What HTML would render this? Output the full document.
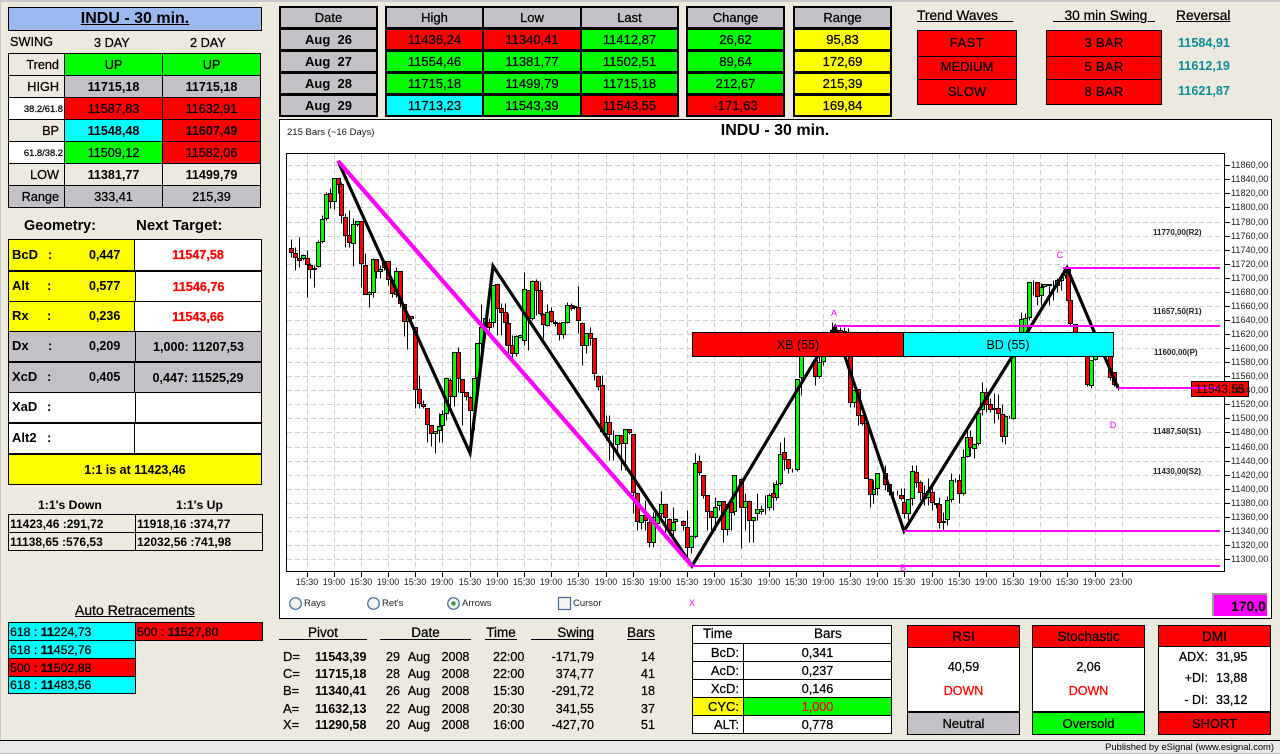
<!DOCTYPE html>
<html><head><meta charset="utf-8"><title>INDU - 30 min.</title>
<style>
html,body{margin:0;padding:0;width:1280px;height:754px;overflow:hidden;background:#ece9df}
body{position:relative;font-family:"Liberation Sans",sans-serif;font-size:13px;color:#000;-webkit-text-stroke:.25px}
.c,.t{position:absolute;box-sizing:border-box;white-space:pre}
.c{display:flex;align-items:center;justify-content:center;border:1px solid #000}
.n{border:0}
.t{line-height:14px}
.b{font-weight:bold;-webkit-text-stroke:0}
.g{background:#c3c1c5}.r{background:#f00}.l{background:#0f0}.y{background:#ff0}.a{background:#0ff}.w{background:#fff}.e{background:#ece9df}
.u{text-decoration:underline}
.k{position:absolute;background:#000}
.d{word-spacing:-.6px}
svg{position:absolute;left:0;top:0}
</style></head><body>
<div style="position:absolute;left:0;top:0;width:1280px;height:2px;background:#c8c8c8"></div>
<div style="position:absolute;left:0;top:0;width:1px;height:754px;background:#c8c8c8"></div>

<!-- left header -->
<div class="c b u" style="left:8px;top:7px;width:254px;height:24px;background:#9bb9ee;font-size:16px">INDU - 30 min.</div>
<div class="t" style="left:10px;top:35px;font-size:12.7px">SWING</div>
<div class="t" style="left:94px;top:36px;font-size:12.7px">3 DAY</div>
<div class="t" style="left:190px;top:36px;font-size:12.7px">2 DAY</div>

<div class="c e" style="left:8px;top:53px;width:57px;height:23px;justify-content:flex-end;padding-right:5px;font-size:12.7px">Trend</div>
<div class="c l" style="left:64px;top:53px;width:99px;height:23px;font-size:12.7px">UP</div>
<div class="c l" style="left:162px;top:53px;width:99px;height:23px;font-size:12.7px">UP</div>
<div class="c e" style="left:8px;top:75px;width:57px;height:23px;justify-content:flex-end;padding-right:5px;font-size:12.7px">HIGH</div>
<div class="c g b" style="left:64px;top:75px;width:99px;height:23px;font-size:12.6px">11715,18</div>
<div class="c g b" style="left:162px;top:75px;width:99px;height:23px;font-size:12.6px">11715,18</div>
<div class="c w" style="left:8px;top:97px;width:57px;height:23px;justify-content:flex-end;padding-right:1px;font-size:9.4px">38.2/61.8</div>
<div class="c r" style="left:64px;top:97px;width:99px;height:23px;font-size:12.6px">11587,83</div>
<div class="c r" style="left:162px;top:97px;width:99px;height:23px;font-size:12.6px">11632,91</div>
<div class="c e" style="left:8px;top:119px;width:57px;height:23px;justify-content:flex-end;padding-right:5px;font-size:12.7px">BP</div>
<div class="c a b" style="left:64px;top:119px;width:99px;height:23px;font-size:12.6px">11548,48</div>
<div class="c r b" style="left:162px;top:119px;width:99px;height:23px;font-size:12.6px">11607,49</div>
<div class="c w" style="left:8px;top:141px;width:57px;height:23px;justify-content:flex-end;padding-right:1px;font-size:9.4px">61.8/38.2</div>
<div class="c l" style="left:64px;top:141px;width:99px;height:23px;font-size:12.6px">11509,12</div>
<div class="c r" style="left:162px;top:141px;width:99px;height:23px;font-size:12.6px">11582,06</div>
<div class="c e" style="left:8px;top:163px;width:57px;height:23px;justify-content:flex-end;padding-right:5px;font-size:12.7px">LOW</div>
<div class="c e b" style="left:64px;top:163px;width:99px;height:23px;font-size:12.6px">11381,77</div>
<div class="c e b" style="left:162px;top:163px;width:99px;height:23px;font-size:12.6px">11499,79</div>
<div class="c g" style="left:8px;top:185px;width:57px;height:23px;justify-content:flex-end;padding-right:5px;font-size:12.7px">Range</div>
<div class="c g" style="left:64px;top:185px;width:99px;height:23px;font-size:12.6px">333,41</div>
<div class="c g" style="left:162px;top:185px;width:99px;height:23px;font-size:12.6px">215,39</div>

<div class="t b" style="left:24px;top:219px;font-size:14.4px">Geometry:</div>
<div class="t b" style="left:136px;top:219px;font-size:15px">Next Target:</div>

<!-- geometry -->
<div class="k" style="left:8px;top:239px;width:254px;height:246px"></div>
<div class="c n y" style="left:9px;top:240px;width:125px;height:30px"></div>
<div class="c n w" style="left:135px;top:240px;width:126px;height:30px;color:#f00;font-weight:bold;font-size:12.6px">11547,58</div>
<div class="c n y" style="left:9px;top:272px;width:126px;height:29px"></div>
<div class="c n w" style="left:136px;top:272px;width:125px;height:29px;color:#f00;font-weight:bold;font-size:12.6px">11546,76</div>
<div class="c n y" style="left:9px;top:302px;width:125px;height:29px"></div>
<div class="c n w" style="left:135px;top:302px;width:126px;height:29px;color:#f00;font-weight:bold;font-size:12.6px">11543,66</div>
<div class="c n g b" style="left:9px;top:332px;width:126px;height:29px"></div>
<div class="c n g b" style="left:136px;top:332px;width:125px;height:29px;font-size:12.6px">1,000: 11207,53</div>
<div class="c n g b" style="left:9px;top:363px;width:125px;height:29px"></div>
<div class="c n g b" style="left:135px;top:363px;width:126px;height:29px;font-size:12.6px">0,447: 11525,29</div>
<div class="c n w" style="left:9px;top:393px;width:126px;height:29px"></div>
<div class="c n w" style="left:136px;top:393px;width:125px;height:29px"></div>
<div class="c n w" style="left:9px;top:424px;width:125px;height:29px"></div>
<div class="c n w" style="left:135px;top:424px;width:126px;height:29px"></div>
<div class="c n y b" style="left:9px;top:455px;width:252px;height:29px;font-size:12.5px">1:1 is at 11423,46</div>
<div class="t b" style="left:12px;top:248px">BcD</div><div class="t b" style="left:48px;top:248px">:</div><div class="t b" style="left:89px;top:248px;font-size:12.5px">0,447</div>
<div class="t b" style="left:12px;top:279px">Alt</div><div class="t b" style="left:47px;top:279px">:</div><div class="t b" style="left:89px;top:279px;font-size:12.5px">0,577</div>
<div class="t b" style="left:12px;top:309px">Rx</div><div class="t b" style="left:47px;top:309px">:</div><div class="t b" style="left:89px;top:309px;font-size:12.5px">0,236</div>
<div class="t b" style="left:12px;top:339px">Dx</div><div class="t b" style="left:48px;top:339px">:</div><div class="t b" style="left:89px;top:339px;font-size:12.5px">0,209</div>
<div class="t b" style="left:12px;top:370px">XcD</div><div class="t b" style="left:47px;top:370px">:</div><div class="t b" style="left:89px;top:370px;font-size:12.5px">0,405</div>
<div class="t b" style="left:12px;top:400px">XaD</div><div class="t b" style="left:47px;top:400px">:</div>
<div class="t b" style="left:12px;top:431px">Alt2</div><div class="t b" style="left:47px;top:431px">:</div>

<div class="t b" style="left:38px;top:498px;font-size:12.2px">1:1's Down</div>
<div class="t b" style="left:176px;top:498px;font-size:12.2px">1:1's Up</div>
<div class="c b" style="left:8px;top:514px;width:128px;height:19px;justify-content:flex-start;padding-left:1px;font-size:12px">11423,46 :291,72</div>
<div class="c b" style="left:135px;top:514px;width:128px;height:19px;justify-content:flex-start;padding-left:1px;font-size:12px">11918,16 :374,77</div>
<div class="c b" style="left:8px;top:532px;width:128px;height:19px;justify-content:flex-start;padding-left:1px;font-size:12px">11138,65 :576,53</div>
<div class="c b" style="left:135px;top:532px;width:128px;height:19px;justify-content:flex-start;padding-left:1px;font-size:12px">12032,56 :741,98</div>

<div class="t u" style="left:75px;top:603px;font-size:14px">Auto Retracements</div>
<div class="c a" style="left:8px;top:622px;width:128px;height:19px;justify-content:flex-start;padding-left:1px;font-size:12.3px">618 : <b>11</b>224,73</div>
<div class="c r" style="left:135px;top:622px;width:128px;height:19px;justify-content:flex-start;padding-left:1px;font-size:12.3px">500 : <b>11</b>527,80</div>
<div class="c a" style="left:8px;top:640px;width:128px;height:19px;justify-content:flex-start;padding-left:1px;font-size:12.3px">618 : <b>11</b>452,76</div>
<div class="c r" style="left:8px;top:658px;width:128px;height:19px;justify-content:flex-start;padding-left:1px;font-size:12.3px">500 : <b>11</b>502,88</div>
<div class="c a" style="left:8px;top:676px;width:128px;height:18px;justify-content:flex-start;padding-left:1px;font-size:12.3px">618 : <b>11</b>483,56</div>

<!-- top tables -->
<div class="k" style="left:279px;top:6px;width:99px;height:111px"></div>
<div class="c n g" style="left:281px;top:8px;width:95px;height:19px">Date</div>
<div class="c n g b" style="left:281px;top:30px;width:95px;height:19px">Aug  26</div>
<div class="c n g b" style="left:281px;top:52px;width:95px;height:19px">Aug  27</div>
<div class="c n g b" style="left:281px;top:74px;width:95px;height:19px">Aug  28</div>
<div class="c n g b" style="left:281px;top:96px;width:95px;height:19px">Aug  29</div>

<div class="k" style="left:385px;top:6px;width:294px;height:111px"></div>
<div class="c n g" style="left:387px;top:8px;width:95px;height:19px">High</div>
<div class="c n g" style="left:484px;top:8px;width:96px;height:19px">Low</div>
<div class="c n g" style="left:582px;top:8px;width:95px;height:19px">Last</div>
<div class="c n r" style="left:387px;top:30px;width:95px;height:19px">11436,24</div>
<div class="c n r" style="left:484px;top:30px;width:96px;height:19px">11340,41</div>
<div class="c n l" style="left:582px;top:30px;width:95px;height:19px">11412,87</div>
<div class="c n l" style="left:387px;top:52px;width:95px;height:19px">11554,46</div>
<div class="c n l" style="left:484px;top:52px;width:96px;height:19px">11381,77</div>
<div class="c n l" style="left:582px;top:52px;width:95px;height:19px">11502,51</div>
<div class="c n l" style="left:387px;top:74px;width:95px;height:19px">11715,18</div>
<div class="c n l" style="left:484px;top:74px;width:96px;height:19px">11499,79</div>
<div class="c n l" style="left:582px;top:74px;width:95px;height:19px">11715,18</div>
<div class="c n a" style="left:387px;top:96px;width:95px;height:19px">11713,23</div>
<div class="c n l" style="left:484px;top:96px;width:96px;height:19px">11543,39</div>
<div class="c n r" style="left:582px;top:96px;width:95px;height:19px">11543,55</div>

<div class="k" style="left:686px;top:6px;width:99px;height:111px"></div>
<div class="c n g" style="left:688px;top:8px;width:95px;height:19px">Change</div>
<div class="c n l" style="left:688px;top:30px;width:95px;height:19px">26,62</div>
<div class="c n l" style="left:688px;top:52px;width:95px;height:19px">89,64</div>
<div class="c n l" style="left:688px;top:74px;width:95px;height:19px">212,67</div>
<div class="c n r" style="left:688px;top:96px;width:95px;height:19px">-171,63</div>

<div class="k" style="left:793px;top:6px;width:99px;height:111px"></div>
<div class="c n g" style="left:795px;top:8px;width:95px;height:19px">Range</div>
<div class="c n y" style="left:795px;top:30px;width:95px;height:19px">95,83</div>
<div class="c n y" style="left:795px;top:52px;width:95px;height:19px">172,69</div>
<div class="c n y" style="left:795px;top:74px;width:95px;height:19px">215,39</div>
<div class="c n y" style="left:795px;top:96px;width:95px;height:19px">169,84</div>

<!-- top right -->
<div class="t u" style="left:917px;top:9px;font-size:13.8px">Trend Waves    </div>
<div class="t u" style="left:1053px;top:9px;font-size:13.8px">   30 min Swing  </div>
<div class="t u" style="left:1176px;top:9px;font-size:13.8px">Reversal</div>
<div class="c r" style="left:917px;top:30px;width:100px;height:27px;font-size:13px;letter-spacing:.5px;padding-bottom:2px">FAST</div>
<div class="c r" style="left:917px;top:56px;width:100px;height:24px;font-size:13px;padding-bottom:3px">MEDIUM</div>
<div class="c r" style="left:917px;top:79px;width:100px;height:26px;font-size:13px;padding-bottom:2px">SLOW</div>
<div class="c r" style="left:1046px;top:30px;width:116px;height:27px;font-size:13px;letter-spacing:.3px;padding-bottom:2px">3 BAR</div>
<div class="c r" style="left:1046px;top:56px;width:116px;height:24px;font-size:13px;letter-spacing:.3px;padding-bottom:3px">5 BAR</div>
<div class="c r" style="left:1046px;top:79px;width:116px;height:26px;font-size:13px;letter-spacing:.3px;padding-bottom:2px">8 BAR</div>
<div class="t b" style="left:1178px;top:36px;font-size:12.6px;color:#0e8c99">11584,91</div>
<div class="t b" style="left:1178px;top:59px;font-size:12.6px;color:#0e8c99">11612,19</div>
<div class="t b" style="left:1178px;top:84px;font-size:12.6px;color:#0e8c99">11621,87</div>

<!-- chart panel -->
<div class="c w" style="left:279px;top:119px;width:993px;height:500px"></div>

<svg width="1280" height="754" viewBox="0 0 1280 754" font-family="Liberation Sans, sans-serif">
<g fill="none" stroke="#cfcfcf" stroke-dasharray="5 3" shape-rendering="crispEdges">
<path d="M287 165.5H1223M287 179.5H1223M287 193.5H1223M287 207.5H1223M287 222.5H1223M287 236.5H1223M287 250.5H1223M287 264.5H1223M287 278.5H1223M287 292.5H1223M287 306.5H1223M287 320.5H1223M287 334.5H1223M287 348.5H1223M287 362.5H1223M287 376.5H1223M287 390.5H1223M287 404.5H1223M287 418.5H1223M287 432.5H1223M287 447.5H1223M287 461.5H1223M287 475.5H1223M287 489.5H1223M287 503.5H1223M287 517.5H1223M287 531.5H1223M287 545.5H1223M287 559.5H1223"/>
<path d="M307.5 154V571M334.5 154V571M361.5 154V571M388.5 154V571M415.5 154V571M442.5 154V571M470.5 154V571M497.5 154V571M524.5 154V571M551.5 154V571M578.5 154V571M606.5 154V571M633.5 154V571M660.5 154V571M687.5 154V571M714.5 154V571M741.5 154V571M769.5 154V571M796.5 154V571M823.5 154V571M850.5 154V571M877.5 154V571M904.5 154V571M932.5 154V571M959.5 154V571M986.5 154V571M1013.5 154V571M1040.5 154V571M1067.5 154V571M1095.5 154V571M1122.5 154V571"/>
</g>
<g fill="none" stroke="#000" shape-rendering="crispEdges">
<path d="M286.5 153.5V571.5H1224.5V153.5ZM307.5 571V577M334.5 571V577M361.5 571V577M388.5 571V577M415.5 571V577M442.5 571V577M470.5 571V577M497.5 571V577M524.5 571V577M551.5 571V577M578.5 571V577M606.5 571V577M633.5 571V577M660.5 571V577M687.5 571V577M714.5 571V577M741.5 571V577M769.5 571V577M796.5 571V577M823.5 571V577M850.5 571V577M877.5 571V577M904.5 571V577M932.5 571V577M959.5 571V577M986.5 571V577M1013.5 571V577M1040.5 571V577M1067.5 571V577M1095.5 571V577M1122.5 571V577"/>
<path d="M1224 165.5h6M1224 179.5h6M1224 193.5h6M1224 207.5h6M1224 222.5h6M1224 236.5h6M1224 250.5h6M1224 264.5h6M1224 278.5h6M1224 292.5h6M1224 306.5h6M1224 320.5h6M1224 334.5h6M1224 348.5h6M1224 362.5h6M1224 376.5h6M1224 390.5h6M1224 404.5h6M1224 418.5h6M1224 432.5h6M1224 447.5h6M1224 461.5h6M1224 475.5h6M1224 489.5h6M1224 503.5h6M1224 517.5h6M1224 531.5h6M1224 545.5h6M1224 559.5h6"/>
</g>
<g transform="translate(.5 .5)" shape-rendering="crispEdges" stroke="#000" stroke-width="1">
<path fill="none" d="M291 239V257M295 247V270M299 237V267M303 254V260M307 250V297M310 263V278M314 265V287M318 240V267M322 215V243M326 192V220M330 188V208M334 178V209M338 178V193M341 182V223M345 213V247M349 210V247M353 218V266M357 221V226M361 221V287M365 253V294M369 291V307M373 258V297M376 259V278M380 265V278M384 260V270M388 261V285M392 280V297M396 267V297M400 271V307M404 304V336M407 315V349M411 316V321M415 327V408M419 375V408M423 400V408M427 408V442M431 425V446M435 431V453M439 413V442M442 410V442M446 377V420M450 378V412M454 352V406M458 347V392M462 379V425M466 392V400M470 396V450M474 378V430M477 343V382M481 304V360M485 318V338M489 318V330M493 285V327M497 284V335M501 303V335M505 303V345M508 313V355M512 335V358M516 335V356M520 335V338M524 272V345M528 290V350M532 280V320M536 279V315M540 281V315M543 313V338M547 304V326M551 307V322M555 320V326M559 322V340M563 322V338M567 302V323M571 303V310M574 305V309M578 286V333M582 322V365M586 333V353M590 327V345M594 338V380M598 375V390M602 375V432M606 415V440M609 415V460M613 430V460M617 435V452M621 435V470M625 429V470M629 429V434M633 434V513M637 493V530M641 515V529M645 500V530M649 520V547M653 512V547M657 513V528M661 491V520M665 504V535M669 518V535M673 507V535M675 518V524M683 520V530M687 510V563M691 535V553M695 453V538M699 455V475M703 475V498M707 495V530M711 511V530M715 497V530M719 501V510M723 501V542M727 504V535M731 497V530M734 475V515M741 478V548M745 493V530M749 500V542M753 517V542M757 493V520M761 505V514M765 495V514M769 493V510M773 482V510M776 480V500M780 442V485M784 437V470M788 459V473M792 468V472M797 379V471M801 356V395M815 356V385M819 356V378M823 356V365M832 322V334M836 326V334M840 327V334M844 327V334M848 328V334M850 356V407M854 390V407M858 389V425M862 415V425M866 423V478M870 478V507M873 480V503M877 473V495M885 465V490M889 484V495M893 491V495M897 490V495M901 488V500M904 488V518M908 499V520M912 465V505M916 465V487M920 480V500M924 485V505M928 478V505M932 487V510M936 503V508M939 497V528M943 512V530M947 496V525M951 473V502M955 478V482M959 474V503M963 449V495M967 430V457M970 430V456M974 443V458M978 408V445M982 382V415M986 388V412M990 398V412M994 393V423M998 394V419M1002 404V442M1005 415V444M1009 415V418M1013 356V419M1021 312V333M1025 313V333M1029 282V320M1033 280V295M1037 282V305M1041 283V305M1044 284V287M1049 284V305M1053 280V300M1057 278V292M1061 273V290M1065 269V278M1068 269V310M1070 300V325M1075 324V333M1087 356V386M1091 360V388M1095 356V360M1110 356V380M1114 372V386M1118 384V390"/>
<path fill="#0f0" d="M301 255h4V258h-4zM316 242h4V266h-4zM320 219h4V241h-4zM324 194h4V218h-4zM332 178h4V201h-4zM351 224h4V243h-4zM355 221h4V224h-4zM367 292h4V294h-4zM371 259h4V292h-4zM378 269h4V271h-4zM394 271h4V294h-4zM405 315h4V321h-4zM433 431h4V433h-4zM437 426h4V430h-4zM440 414h4V425h-4zM444 378h4V413h-4zM452 352h4V396h-4zM472 378h4V410h-4zM475 343h4V377h-4zM479 327h4V343h-4zM483 318h4V327h-4zM491 285h4V322h-4zM514 336h4V353h-4zM518 335h4V337h-4zM522 289h4V340h-4zM530 281h4V318h-4zM545 312h4V325h-4zM553 322h4V323h-4zM561 322h4V334h-4zM565 305h4V322h-4zM584 333h4V345h-4zM604 422h4V433h-4zM615 435h4V444h-4zM623 429h4V443h-4zM639 515h4V522h-4zM651 517h4V542h-4zM655 513h4V523h-4zM659 504h4V513h-4zM671 522h4V530h-4zM673 519h4V521h-4zM689 536h4V547h-4zM693 463h4V536h-4zM713 507h4V517h-4zM717 501h4V505h-4zM725 504h4V529h-4zM732 475h4V511h-4zM743 501h4V507h-4zM751 517h4V520h-4zM755 509h4V513h-4zM759 509h4V511h-4zM767 495h4V507h-4zM774 484h4V497h-4zM778 454h4V483h-4zM795 379h4V469h-4zM799 356h4V377h-4zM817 362h4V376h-4zM821 356h4V361h-4zM842 331h4V334h-4zM852 390h4V402h-4zM871 489h4V494h-4zM875 473h4V488h-4zM906 499h4V513h-4zM910 471h4V498h-4zM926 491h4V497h-4zM941 521h4V522h-4zM945 500h4V519h-4zM949 480h4V499h-4zM961 457h4V493h-4zM965 437h4V456h-4zM972 444h4V448h-4zM976 413h4V443h-4zM980 392h4V409h-4zM1003 416h4V436h-4zM1011 356h4V418h-4zM1019 319h4V333h-4zM1023 318h4V333h-4zM1027 282h4V317h-4zM1039 287h4V295h-4zM1042 284h4V286h-4zM1047 284h4V285h-4zM1055 280h4V285h-4zM1059 277h4V280h-4zM1063 270h4V275h-4zM1089 360h4V385h-4zM1093 356h4V359h-4z"/>
<path fill="#f00" d="M289 248h4V252h-4zM293 253h4V257h-4zM297 258h4V260h-4zM305 258h4V264h-4zM308 265h4V269h-4zM312 268h4V269h-4zM328 193h4V201h-4zM336 178h4V184h-4zM339 184h4V215h-4zM343 217h4V235h-4zM347 235h4V242h-4zM359 221h4V263h-4zM363 265h4V294h-4zM374 259h4V271h-4zM382 261h4V267h-4zM386 261h4V279h-4zM390 280h4V293h-4zM398 271h4V303h-4zM402 304h4V321h-4zM409 316h4V318h-4zM413 327h4V389h-4zM417 389h4V403h-4zM421 404h4V406h-4zM425 408h4V424h-4zM429 425h4V433h-4zM448 380h4V396h-4zM456 352h4V378h-4zM460 379h4V392h-4zM464 392h4V396h-4zM468 397h4V410h-4zM487 322h4V327h-4zM495 284h4V308h-4zM499 308h4V312h-4zM503 312h4V322h-4zM506 323h4V345h-4zM510 345h4V353h-4zM526 290h4V318h-4zM534 281h4V290h-4zM538 290h4V313h-4zM541 314h4V324h-4zM549 311h4V321h-4zM557 323h4V334h-4zM569 305h4V308h-4zM572 306h4V307h-4zM576 307h4V320h-4zM580 323h4V345h-4zM588 333h4V338h-4zM592 338h4V373h-4zM596 376h4V386h-4zM600 385h4V431h-4zM607 422h4V434h-4zM619 435h4V443h-4zM627 429h4V432h-4zM631 434h4V492h-4zM635 493h4V521h-4zM643 515h4V520h-4zM647 522h4V542h-4zM663 504h4V517h-4zM667 519h4V530h-4zM681 521h4V525h-4zM685 527h4V547h-4zM697 461h4V472h-4zM701 475h4V495h-4zM705 495h4V511h-4zM709 511h4V517h-4zM721 501h4V529h-4zM729 502h4V512h-4zM739 479h4V507h-4zM747 501h4V520h-4zM771 493h4V497h-4zM782 452h4V459h-4zM786 459h4V468h-4zM813 360h4V376h-4zM830 330h4V334h-4zM838 330h4V334h-4zM848 356h4V402h-4zM856 389h4V415h-4zM860 415h4V423h-4zM864 423h4V478h-4zM868 479h4V494h-4zM883 473h4V484h-4zM887 484h4V491h-4zM899 495h4V498h-4zM902 502h4V513h-4zM914 472h4V482h-4zM918 482h4V492h-4zM922 493h4V498h-4zM930 492h4V502h-4zM934 503h4V504h-4zM937 504h4V522h-4zM957 480h4V493h-4zM968 437h4V447h-4zM984 392h4V404h-4zM988 404h4V409h-4zM992 408h4V409h-4zM996 408h4V413h-4zM1000 414h4V436h-4zM1035 282h4V296h-4zM1066 269h4V300h-4zM1068 300h4V323h-4zM1073 324h4V333h-4zM1085 356h4V384h-4zM1108 356h4V377h-4zM1112 372h4V384h-4z"/>
</g>
<path d="M338 161L470 453L493 266L692 566L835 327L904 531L1067 268L1118 388" fill="none" stroke="#000" stroke-width="3.2" stroke-linejoin="miter"/>
<path d="M338 161L692 566" fill="none" stroke="#f0f" stroke-width="4.2"/>
<g shape-rendering="crispEdges">
<rect x="692.5" y="332.5" width="211" height="24" fill="#f00" stroke="#000"/>
<rect x="903.5" y="332.5" width="210" height="24" fill="#0ff" stroke="#000"/>
<rect x="1191.5" y="381.5" width="57" height="15" fill="#f00" stroke="#000"/>
<path d="M692 566H1220M835 326H1220M1063 268H1220M904 531H1220M1118 388H1220" stroke="#f0f" stroke-width="2" fill="none"/>
</g>
<g font-size="12.5" text-anchor="middle" fill="#000"><text x="798" y="349">XB (55)</text><text x="1008" y="349">BD (55)</text></g>
<text x="1220" y="393" font-size="12" text-anchor="middle" fill="#000">11543,55</text>
<g font-size="9" fill="#f0f" text-anchor="middle"><text x="834" y="316">A</text><text x="1060" y="258">C</text><text x="1113" y="428">D</text><text x="903" y="571">B</text><text x="692" y="606">X</text></g>
<g font-size="8" font-weight="bold" fill="#222" stroke="none" style="-webkit-text-stroke:0"><text x="1153" y="235">11770,00(R2)</text><text x="1153" y="314">11657,50(R1)</text><text x="1154" y="355">11600,00(P)</text><text x="1153" y="434">11487,50(S1)</text><text x="1153" y="474">11430,00(S2)</text></g>
<g font-size="9.1" fill="#222"><text x="1231" y="168">11860,00</text><text x="1231" y="182">11840,00</text><text x="1231" y="196">11820,00</text><text x="1231" y="210">11800,00</text><text x="1231" y="225">11780,00</text><text x="1231" y="239">11760,00</text><text x="1231" y="253">11740,00</text><text x="1231" y="267">11720,00</text><text x="1231" y="281">11700,00</text><text x="1231" y="295">11680,00</text><text x="1231" y="309">11660,00</text><text x="1231" y="323">11640,00</text><text x="1231" y="337">11620,00</text><text x="1231" y="351">11600,00</text><text x="1231" y="365">11580,00</text><text x="1231" y="379">11560,00</text><text x="1231" y="393">11540,00</text><text x="1231" y="407">11520,00</text><text x="1231" y="421">11500,00</text><text x="1231" y="435">11480,00</text><text x="1231" y="450">11460,00</text><text x="1231" y="464">11440,00</text><text x="1231" y="478">11420,00</text><text x="1231" y="492">11400,00</text><text x="1231" y="506">11380,00</text><text x="1231" y="520">11360,00</text><text x="1231" y="534">11340,00</text><text x="1231" y="548">11320,00</text><text x="1231" y="562">11300,00</text></g>
<g font-size="9" fill="#222" text-anchor="middle"><text x="307" y="585">15:30</text><text x="334" y="585">19:00</text><text x="361" y="585">15:30</text><text x="388" y="585">19:00</text><text x="415" y="585">15:30</text><text x="442" y="585">19:00</text><text x="470" y="585">15:30</text><text x="497" y="585">19:00</text><text x="524" y="585">15:30</text><text x="551" y="585">19:00</text><text x="578" y="585">15:30</text><text x="606" y="585">19:00</text><text x="633" y="585">15:30</text><text x="660" y="585">19:00</text><text x="687" y="585">15:30</text><text x="714" y="585">19:00</text><text x="741" y="585">15:30</text><text x="769" y="585">19:00</text><text x="796" y="585">15:30</text><text x="823" y="585">19:00</text><text x="850" y="585">15:30</text><text x="877" y="585">19:00</text><text x="904" y="585">15:30</text><text x="932" y="585">19:00</text><text x="959" y="585">15:30</text><text x="986" y="585">19:00</text><text x="1013" y="585">15:30</text><text x="1040" y="585">19:00</text><text x="1067" y="585">15:30</text><text x="1094" y="585">19:00</text><text x="1121" y="585">23:00</text></g>
<g fill="#f4f4f4" stroke="#3f6c9c" stroke-width="1.2"><circle cx="295.5" cy="603.5" r="5.8"/><circle cx="373.5" cy="603.5" r="5.8"/><circle cx="453.5" cy="603.5" r="5.8"/><rect x="558.5" y="597.5" width="12" height="12"/></g>
<circle cx="453.5" cy="603.5" r="2.2" fill="#2a9d2a"/>
<g font-size="9.5" fill="#222"><text x="304" y="606">Rays</text><text x="382" y="606">Ret's</text><text x="462" y="606">Arrows</text><text x="573" y="606">Cursor</text></g>
<text x="287" y="135" font-size="9.5" fill="#111">215 Bars (~16 Days)</text>
<text x="775" y="135" font-size="16" font-weight="bold" text-anchor="middle" style="-webkit-text-stroke:0">INDU - 30 min.</text>
</svg>

<div class="c b" style="left:1212px;top:593px;width:55px;height:23px;background:#f0f;border:2px solid #999;border-right:0;border-bottom:0;justify-content:flex-end;padding-right:1px;font-size:14px">170,0</div>

<!-- pivot table -->
<div class="t" style="left:279px;top:626px;width:88px;text-align:center;height:14px;border-bottom:1px solid #000;font-size:13.5px">Pivot</div>
<div class="t" style="left:380px;top:626px;width:91px;text-align:center;height:14px;border-bottom:1px solid #000;font-size:13.5px">Date</div>
<div class="t" style="left:485px;top:626px;width:32px;text-align:center;height:14px;border-bottom:1px solid #000;font-size:13.5px">Time</div>
<div class="t" style="left:531px;top:626px;width:63px;text-align:right;height:14px;border-bottom:1px solid #000;font-size:13.5px">Swing</div>
<div class="t" style="left:627px;top:626px;width:28px;text-align:center;height:14px;border-bottom:1px solid #000;font-size:13.5px">Bars</div>

<div class="t" style="left:283px;top:650px">D=</div><div class="t b" style="left:315px;top:650px;font-size:12.5px">11543,39</div><div class="t d" style="left:386px;top:650px;font-size:12.5px">29   Aug    2008</div><div class="t" style="left:493px;top:650px;font-size:12.5px">22:00</div><div class="t" style="left:534px;top:650px;width:60px;text-align:right;font-size:12.5px">-171,79</div><div class="t" style="left:638px;top:650px;width:20px;text-align:center;font-size:12.5px">14</div>
<div class="t" style="left:283px;top:667px">C=</div><div class="t b" style="left:315px;top:667px;font-size:12.5px">11715,18</div><div class="t d" style="left:386px;top:667px;font-size:12.5px">28   Aug    2008</div><div class="t" style="left:493px;top:667px;font-size:12.5px">22:00</div><div class="t" style="left:534px;top:667px;width:60px;text-align:right;font-size:12.5px">374,77</div><div class="t" style="left:638px;top:667px;width:20px;text-align:center;font-size:12.5px">41</div>
<div class="t" style="left:283px;top:684px">B=</div><div class="t b" style="left:315px;top:684px;font-size:12.5px">11340,41</div><div class="t d" style="left:386px;top:684px;font-size:12.5px">26   Aug    2008</div><div class="t" style="left:493px;top:684px;font-size:12.5px">15:30</div><div class="t" style="left:534px;top:684px;width:60px;text-align:right;font-size:12.5px">-291,72</div><div class="t" style="left:638px;top:684px;width:20px;text-align:center;font-size:12.5px">18</div>
<div class="t" style="left:283px;top:702px">A=</div><div class="t b" style="left:315px;top:702px;font-size:12.5px">11632,13</div><div class="t d" style="left:386px;top:702px;font-size:12.5px">22   Aug    2008</div><div class="t" style="left:493px;top:702px;font-size:12.5px">20:30</div><div class="t" style="left:534px;top:702px;width:60px;text-align:right;font-size:12.5px">341,55</div><div class="t" style="left:638px;top:702px;width:20px;text-align:center;font-size:12.5px">37</div>
<div class="t" style="left:283px;top:718px">X=</div><div class="t b" style="left:315px;top:718px;font-size:12.5px">11290,58</div><div class="t d" style="left:386px;top:718px;font-size:12.5px">20   Aug    2008</div><div class="t" style="left:493px;top:718px;font-size:12.5px">16:00</div><div class="t" style="left:534px;top:718px;width:60px;text-align:right;font-size:12.5px">-427,70</div><div class="t" style="left:638px;top:718px;width:20px;text-align:center;font-size:12.5px">51</div>

<!-- time table -->
<div class="c w" style="left:692px;top:625px;width:200px;height:19px"></div>
<div class="t" style="left:703px;top:627px;font-size:13.5px">Time</div><div class="t" style="left:814px;top:627px;font-size:13.5px">Bars</div>
<div class="c w" style="left:692px;top:643px;width:52px;height:19px;justify-content:flex-end;padding-right:4px">BcD:</div><div class="c w" style="left:743px;top:643px;width:149px;height:19px;font-size:12.6px">0,341</div>
<div class="c w" style="left:692px;top:661px;width:52px;height:19px;justify-content:flex-end;padding-right:4px">AcD:</div><div class="c w" style="left:743px;top:661px;width:149px;height:19px;font-size:12.6px">0,237</div>
<div class="c w" style="left:692px;top:679px;width:52px;height:19px;justify-content:flex-end;padding-right:4px">XcD:</div><div class="c w" style="left:743px;top:679px;width:149px;height:19px;font-size:12.6px">0,146</div>
<div class="c y" style="left:692px;top:697px;width:52px;height:19px;justify-content:flex-end;padding-right:4px">CYC:</div><div class="c l" style="left:743px;top:697px;width:149px;height:19px;color:#f00;font-size:12.6px">1,000</div>
<div class="c w" style="left:692px;top:715px;width:52px;height:19px;justify-content:flex-end;padding-right:4px">ALT:</div><div class="c w" style="left:743px;top:715px;width:149px;height:19px;font-size:12.6px">0,778</div>

<!-- RSI -->
<div class="c r" style="left:907px;top:625px;width:113px;height:23px;font-size:13.5px">RSI</div>
<div class="c w" style="left:907px;top:647px;width:113px;height:66px;border-bottom:2px solid #000"></div>
<div class="t" style="left:907px;top:660px;width:113px;text-align:center;font-size:12.5px">40,59</div>
<div class="t" style="left:907px;top:684px;width:113px;text-align:center;font-size:12.5px;color:#f00">DOWN</div>
<div class="c g" style="left:907px;top:712px;width:113px;height:23px;font-size:13px">Neutral</div>

<div class="c r" style="left:1032px;top:625px;width:113px;height:23px;font-size:13.5px">Stochastic</div>
<div class="c w" style="left:1032px;top:647px;width:113px;height:66px;border-bottom:2px solid #000"></div>
<div class="t" style="left:1032px;top:660px;width:113px;text-align:center;font-size:12.5px">2,06</div>
<div class="t" style="left:1032px;top:684px;width:113px;text-align:center;font-size:12.5px;color:#f00">DOWN</div>
<div class="c l" style="left:1032px;top:712px;width:113px;height:23px;font-size:13px">Oversold</div>

<div class="c r" style="left:1158px;top:625px;width:113px;height:22px;font-size:13.5px">DMI</div>
<div class="c w" style="left:1158px;top:646px;width:113px;height:67px;border-bottom:2px solid #000"></div>
<div class="t" style="left:1160px;top:650px;width:48px;text-align:right;font-size:12.5px">ADX:</div><div class="t" style="left:1216px;top:650px;font-size:12.5px">31,95</div>
<div class="t" style="left:1160px;top:671px;width:48px;text-align:right;font-size:12.5px">+DI:</div><div class="t" style="left:1216px;top:671px;font-size:12.5px">13,88</div>
<div class="t" style="left:1160px;top:693px;width:48px;text-align:right;font-size:12.5px">- DI:</div><div class="t" style="left:1216px;top:693px;font-size:12.5px">33,12</div>
<div class="c r" style="left:1158px;top:712px;width:113px;height:23px;font-size:13px">SHORT</div>

<!-- status -->
<div style="position:absolute;left:0;top:740px;width:1280px;height:13px;background:#e9e9e9;border-top:1px solid #000;box-sizing:border-box"></div>
<div style="position:absolute;left:0;top:753px;width:1280px;height:1px;background:#bbb"></div>
<div class="t" style="left:1074px;top:740px;width:200px;text-align:right;font-size:9.4px;-webkit-text-stroke:0">Published by eSignal (www.esignal.com)</div>
</body></html>
